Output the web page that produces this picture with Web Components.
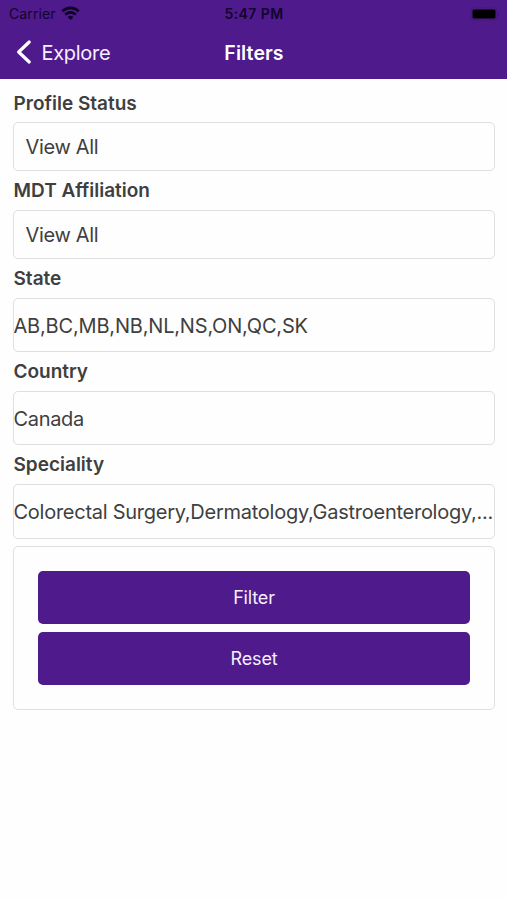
<!DOCTYPE html>
<html lang="en">
<head>
<meta charset="utf-8">
<title>Filters</title>
<style>
    body {
        margin: 0;
        background: #fefefe;
        font-family: Inter, "Liberation Sans", sans-serif;
        color: #3f3f41;
    }
</style>
</head>
<body>
<filters-screen></filters-screen>
<script>
class StatusBar extends HTMLElement {
    constructor() {
        super();
        this.attachShadow({ mode: 'open' });
        this.shadowRoot.innerHTML = `
            <style>
                :host {
                    display: grid;
                    grid-template-columns: 1fr auto 1fr;
                    align-items: center;
                    height: 27px;
                    padding: 0 8px 0 9px;
                    color: #12042e;
                    font-size: 14px;
                }
                .left {
                    display: flex;
                    align-items: center;
                    gap: 5px;
                    letter-spacing: 0.1px;
                }
                .time {
                    font-weight: 600;
                    letter-spacing: 0.4px;
                }
                .battery { justify-self: end; }
                svg { display: block; }
                .wifi { margin-bottom: 2px; }
            </style>
            <div class="left">
                <span>Carrier</span>
                <svg class="wifi" width="19" height="14" viewBox="0 0 19 14" fill="none" stroke="#0b0220" stroke-width="2.7">
                    <path d="M1.3 5.2a11.6 11.6 0 0 1 16.4 0"/>
                    <path d="M4.3 8.6a7.4 7.4 0 0 1 10.4 0"/>
                    <path d="M9.5 14 6.6 11.1a4.1 4.1 0 0 1 5.8 0z" fill="#0b0220" stroke="none"/>
                </svg>
            </div>
            <span class="time">5:47 PM</span>
            <svg class="battery" width="29" height="14" viewBox="0 0 29 14">
                <rect x="1" y="1" width="26" height="12" rx="3" fill="none" stroke="#451679"/>
                <rect x="2.5" y="2.5" width="23" height="9" rx="1.5" fill="#000"/>
                <path d="M27.8 5v4q1.2-.6 1.2-2t-1.2-2z" fill="#3f1472"/>
            </svg>
        `;
    }
}
customElements.define('status-bar', StatusBar);

class NavHeader extends HTMLElement {
    constructor() {
        super();
        this.attachShadow({ mode: 'open' });
        this.shadowRoot.innerHTML = `
            <style>
                :host {
                    display: grid;
                    grid-template-columns: 1fr auto 1fr;
                    align-items: center;
                    height: 51px;
                    padding: 0 15px 1px 16px;
                    color: #f6efff;
                    font-size: 20px;
                }
                .back {
                    display: flex;
                    align-items: center;
                    gap: 10.5px;
                    letter-spacing: -0.3px;
                }
                .title {
                    color: #fff;
                    font-size: 19.5px;
                    font-weight: 600;
                    letter-spacing: 0.1px;
                }
            </style>
            <div class="back">
                <svg width="15" height="25" viewBox="0 0 15 25" fill="none" stroke="#fff" stroke-width="3.2" stroke-linecap="round" stroke-linejoin="round">
                    <path d="M13.2 2 2.7 12l10.5 10"/>
                </svg>
                <span><slot name="back"></slot></span>
            </div>
            <span class="title"><slot></slot></span>
        `;
    }
}
customElements.define('nav-header', NavHeader);

class FilterField extends HTMLElement {
    constructor() {
        super();
        this.attachShadow({ mode: 'open' });
        this.shadowRoot.innerHTML = `
            <style>
                :host { display: block; }
                .label {
                    display: flex;
                    align-items: center;
                    height: 38.8px;
                    padding-left: 0.5px;
                    font-size: 19px;
                    font-weight: 600;
                }
                .value {
                    box-sizing: border-box;
                    height: 54.5px;
                    line-height: 54.5px;
                    border: 1px solid #dfdfdf;
                    border-radius: 5px;
                    font-size: 20px;
                    letter-spacing: var(--tracking, -0.34px);
                    text-indent: -0.5px;
                    white-space: nowrap;
                    overflow: hidden;
                }
                :host([picker]) .value {
                    height: 48.8px;
                    line-height: 49.5px;
                    padding-left: 12px;
                }
            </style>
            <div class="label">${this.getAttribute('label')}</div>
            <div class="value"><slot></slot></div>
        `;
    }
}
customElements.define('filter-field', FilterField);

class ActionButton extends HTMLElement {
    constructor() {
        super();
        this.attachShadow({ mode: 'open' });
        this.shadowRoot.innerHTML = `
            <style>
                :host {
                    display: flex;
                    align-items: center;
                    justify-content: center;
                    height: 53px;
                    border-radius: 5px;
                    background: #4f1a8c;
                    color: #f6efff;
                    font-size: 18px;
                    letter-spacing: -0.15px;
                }
            </style>
            <slot></slot>
        `;
    }
}
customElements.define('action-button', ActionButton);

class FiltersScreen extends HTMLElement {
    constructor() {
        super();
        this.attachShadow({ mode: 'open' });
        this.shadowRoot.innerHTML = `
            <style>
                :host { display: block; }
                header { background: #4f1a8c; }
                main { padding: 4.7px 12px 0 13px; }
                .state { --tracking: -0.18px; }
                .speciality { --tracking: -0.26px; }
                .actions {
                    display: flex;
                    flex-direction: column;
                    gap: 8px;
                    box-sizing: border-box;
                    height: 164px;
                    margin-top: 7.5px;
                    padding: 24px 24px 0;
                    border: 1px solid #dfdfdf;
                    border-radius: 5px;
                }
            </style>
            <header>
                <status-bar></status-bar>
                <nav-header><span slot="back">Explore</span>Filters</nav-header>
            </header>
            <main>
                <filter-field picker label="Profile Status">View All</filter-field>
                <filter-field picker label="MDT Affiliation">View All</filter-field>
                <filter-field class="state" label="State">AB,BC,MB,NB,NL,NS,ON,QC,SK</filter-field>
                <filter-field label="Country">Canada</filter-field>
                <filter-field class="speciality" label="Speciality">Colorectal Surgery,Dermatology,Gastroenterology,...</filter-field>
                <div class="actions">
                    <action-button>Filter</action-button>
                    <action-button>Reset</action-button>
                </div>
            </main>
        `;
    }
}
customElements.define('filters-screen', FiltersScreen);
</script>
</body>
</html>
